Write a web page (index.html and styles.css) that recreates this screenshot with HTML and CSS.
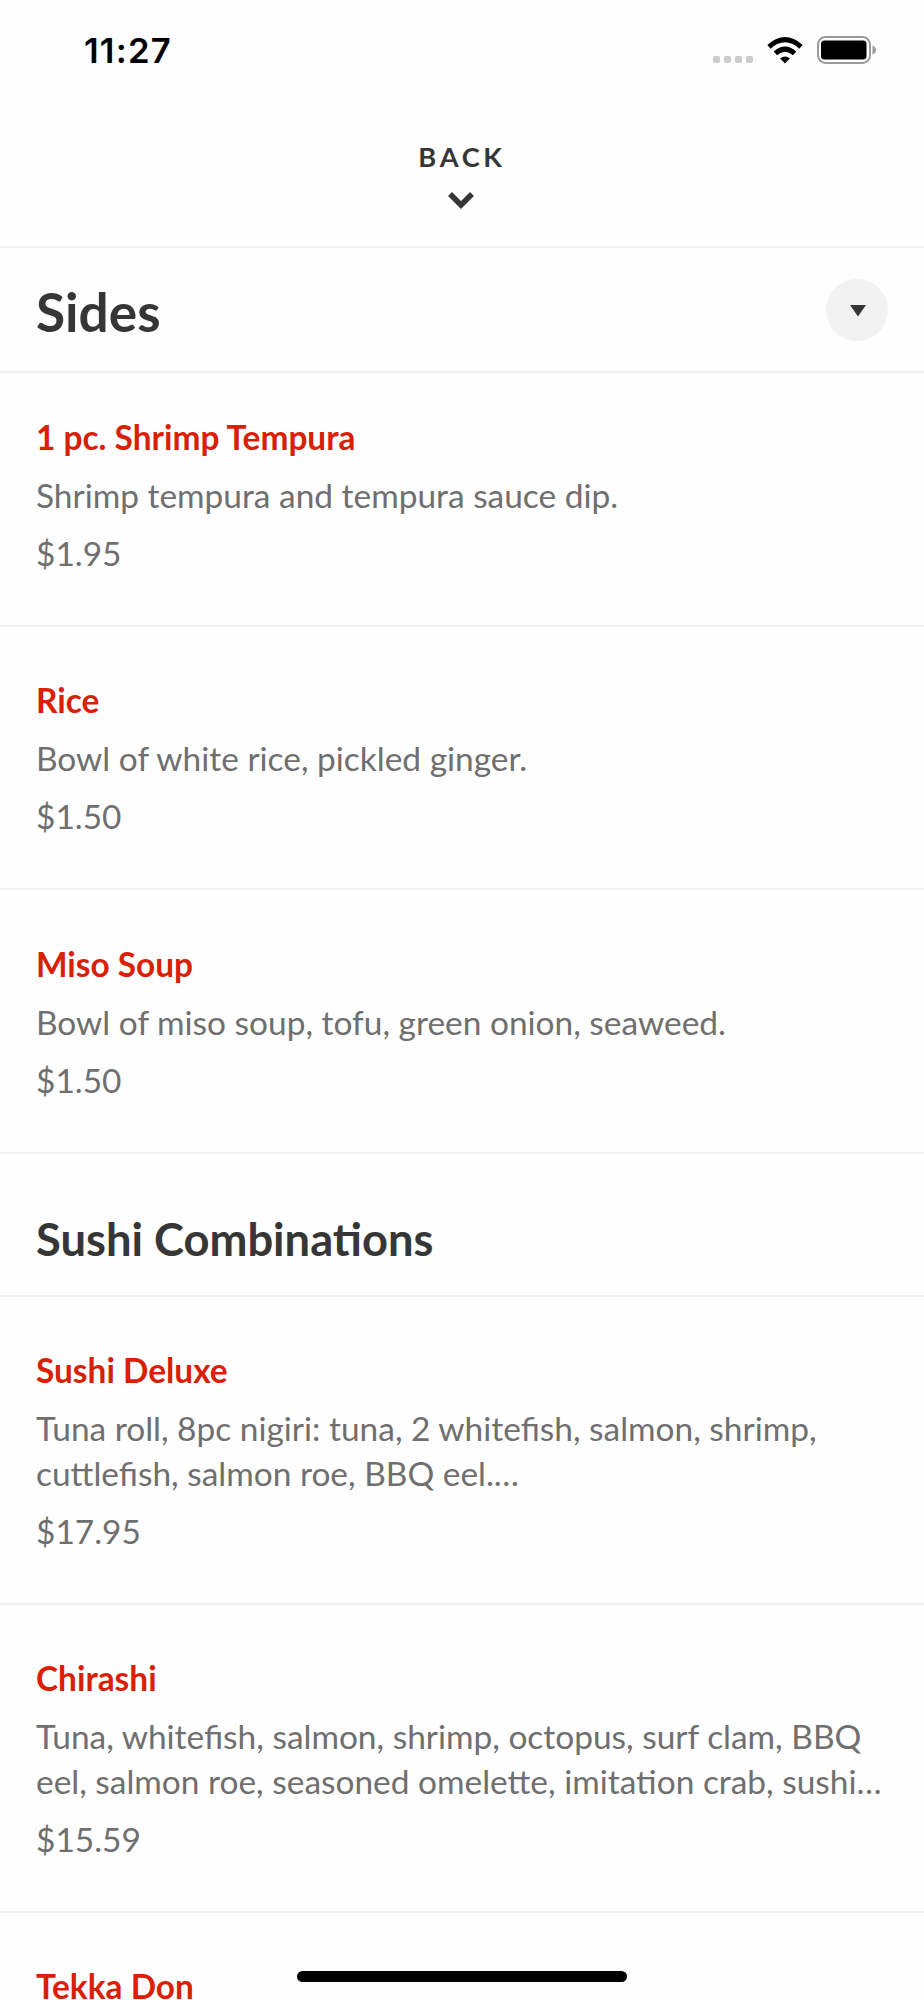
FILE: index.html
```
<!DOCTYPE html>
<html lang="en">
<head>
<meta charset="UTF-8" />
<meta name="viewport" content="width=device-width, initial-scale=1" />
<title>Menu</title>
<link rel="stylesheet" href="styles.css">
</head>
<body>

<header>
  <div class="status-bar">
    <span class="time">11:27</span>
    <div class="status-icons">
      <div class="signal"><i></i><i></i><i></i><i></i></div>
      <svg class="wifi" width="36" height="27" viewBox="0 0 36 27">
        <path d="M18 26.5 L13.2 21.6 Q18 17.3 22.8 21.6 Z" fill="#000" />
        <path d="M8.4 16.3 Q18 7.8 27.6 16.3" fill="none" stroke="#000" stroke-width="5" />
        <path d="M2 9.8 Q18 -4.4 34 9.8" fill="none" stroke="#000" stroke-width="5" />
      </svg>
      <svg class="battery" width="60" height="28" viewBox="0 0 60 28">
        <rect x="1" y="1" width="52" height="26" rx="7.5" fill="none" stroke="#9b9b9b" stroke-width="2" />
        <rect x="4" y="4.5" width="45.5" height="19" rx="3.5" fill="#000" />
        <path d="M55.5 9.5 Q59 11 59 14 Q59 17 55.5 18.5 Z" fill="#9b9b9b" />
      </svg>
    </div>
  </div>
  <a href="#" class="back">
    <span>BACK</span>
    <svg width="26" height="17" viewBox="0 0 26 17">
      <path d="M2 2 L13 13 L24 2" fill="none" stroke="#363636" stroke-width="5.5" />
    </svg>
  </a>
</header>

<div class="category-bar">
  <h1>Sides</h1>
  <button class="btn-category" aria-label="Categories">
    <svg width="16" height="12" viewBox="0 0 16 12">
      <path d="M0 0 H16 L8 11.5 Z" fill="#363636" />
    </svg>
  </button>
</div>

<main>
  <section class="menu-section">
    <div class="menu-item">
      <h3>1 pc. Shrimp Tempura</h3>
      <p class="description">Shrimp tempura and tempura sauce dip.</p>
      <p class="price">$1.95</p>
    </div>
    <div class="menu-item">
      <h3>Rice</h3>
      <p class="description">Bowl of white rice, pickled ginger.</p>
      <p class="price">$1.50</p>
    </div>
    <div class="menu-item">
      <h3>Miso Soup</h3>
      <p class="description">Bowl of miso soup, tofu, green onion, seaweed.</p>
      <p class="price">$1.50</p>
    </div>
  </section>

  <section class="menu-section">
    <h2>Sushi Combinations</h2>
    <div class="menu-item">
      <h3>Sushi Deluxe</h3>
      <p class="description">Tuna roll, 8pc nigiri: tuna, 2 whitefish, salmon, shrimp,<br>cuttlefish, salmon roe, BBQ eel.…</p>
      <p class="price">$17.95</p>
    </div>
    <div class="menu-item">
      <h3>Chirashi</h3>
      <p class="description">Tuna, whitefish, salmon, shrimp, octopus, surf clam, BBQ<br>eel, salmon roe, seasoned omelette, imitation crab, sushi…</p>
      <p class="price">$15.59</p>
    </div>
    <div class="menu-item">
      <h3>Tekka Don</h3>
    </div>
  </section>
</main>

<div class="home-indicator"></div>

</body>
</html>
```
FILE: styles.css
```
* {
  box-sizing: border-box;
}
body {
  font-family: Lato, sans-serif;
  margin: 0;
  height: 2000px;
  overflow: hidden;
  background: #fefefe;
  color: #6f6f6f;
}
h1, h2, h3, p {
  margin: 0;
}

/* Header */
header {
  height: 248px;
  border-bottom: 2px solid #f0f0f0;
}
.status-bar {
  display: flex;
  justify-content: space-between;
  height: 100px;
  padding: 30px 47px 0 84px;
}
.time {
  font-family: Inter, sans-serif;
  font-size: 34.7px;
  font-weight: 600;
  line-height: 41px;
  letter-spacing: 1.2px;
  color: #000;
}
.status-icons {
  display: flex;
  align-items: flex-start;
  padding-top: 6px;
}
.signal {
  display: flex;
  gap: 4px;
  margin: 20px 14px 0 0;
}
.signal i {
  width: 7px;
  height: 7px;
  border-radius: 2px;
  background: #cbcbcb;
}
.wifi {
  margin: 1px 14px 0 0;
}
.back {
  display: flex;
  flex-direction: column;
  align-items: center;
  padding-top: 40px;
  color: #363636;
  text-decoration: none;
}
.back span {
  font-size: 27.2px;
  font-weight: 700;
  line-height: 34px;
  letter-spacing: 3.7px;
}
.back svg {
  margin: 18px 3px 0 0;
}

/* Category bar */
.category-bar {
  display: flex;
  align-items: center;
  justify-content: space-between;
  height: 125px;
  padding: 0 36px;
  border-bottom: 2px solid #f0f0f0;
}
.category-bar h1 {
  font-size: 53.2px;
  line-height: 64px;
  padding-top: 2px;
  color: #363636;
}
.btn-category {
  display: flex;
  align-items: center;
  justify-content: center;
  width: 62px;
  height: 62px;
  padding: 3px 0 0 2px;
  border: none;
  border-radius: 50%;
  background: #f2f2f2;
}

/* Menu */
.menu-section h2 {
  height: 143px;
  padding: 58px 36px 0;
  font-size: 45.3px;
  line-height: 54px;
  color: #363636;
  border-bottom: 2px solid #f0f0f0;
}
.menu-item {
  padding: 51.4px 36px 49.4px;
  border-bottom: 2px solid #f0f0f0;
  font-size: 33.45px;
  line-height: 44.6px;
}
.menu-section:first-child .menu-item:first-child {
  padding-top: 42px;
}
.menu-item h3 {
  font-size: 33.42px;
  font-weight: 700;
  color: #d91f05;
}
.description, .price {
  margin-top: 13.4px;
}
.description {
  white-space: nowrap;
}

.home-indicator {
  position: fixed;
  left: 297px;
  bottom: 18px;
  width: 330px;
  height: 11px;
  border-radius: 6px;
  background: #000;
}
```
